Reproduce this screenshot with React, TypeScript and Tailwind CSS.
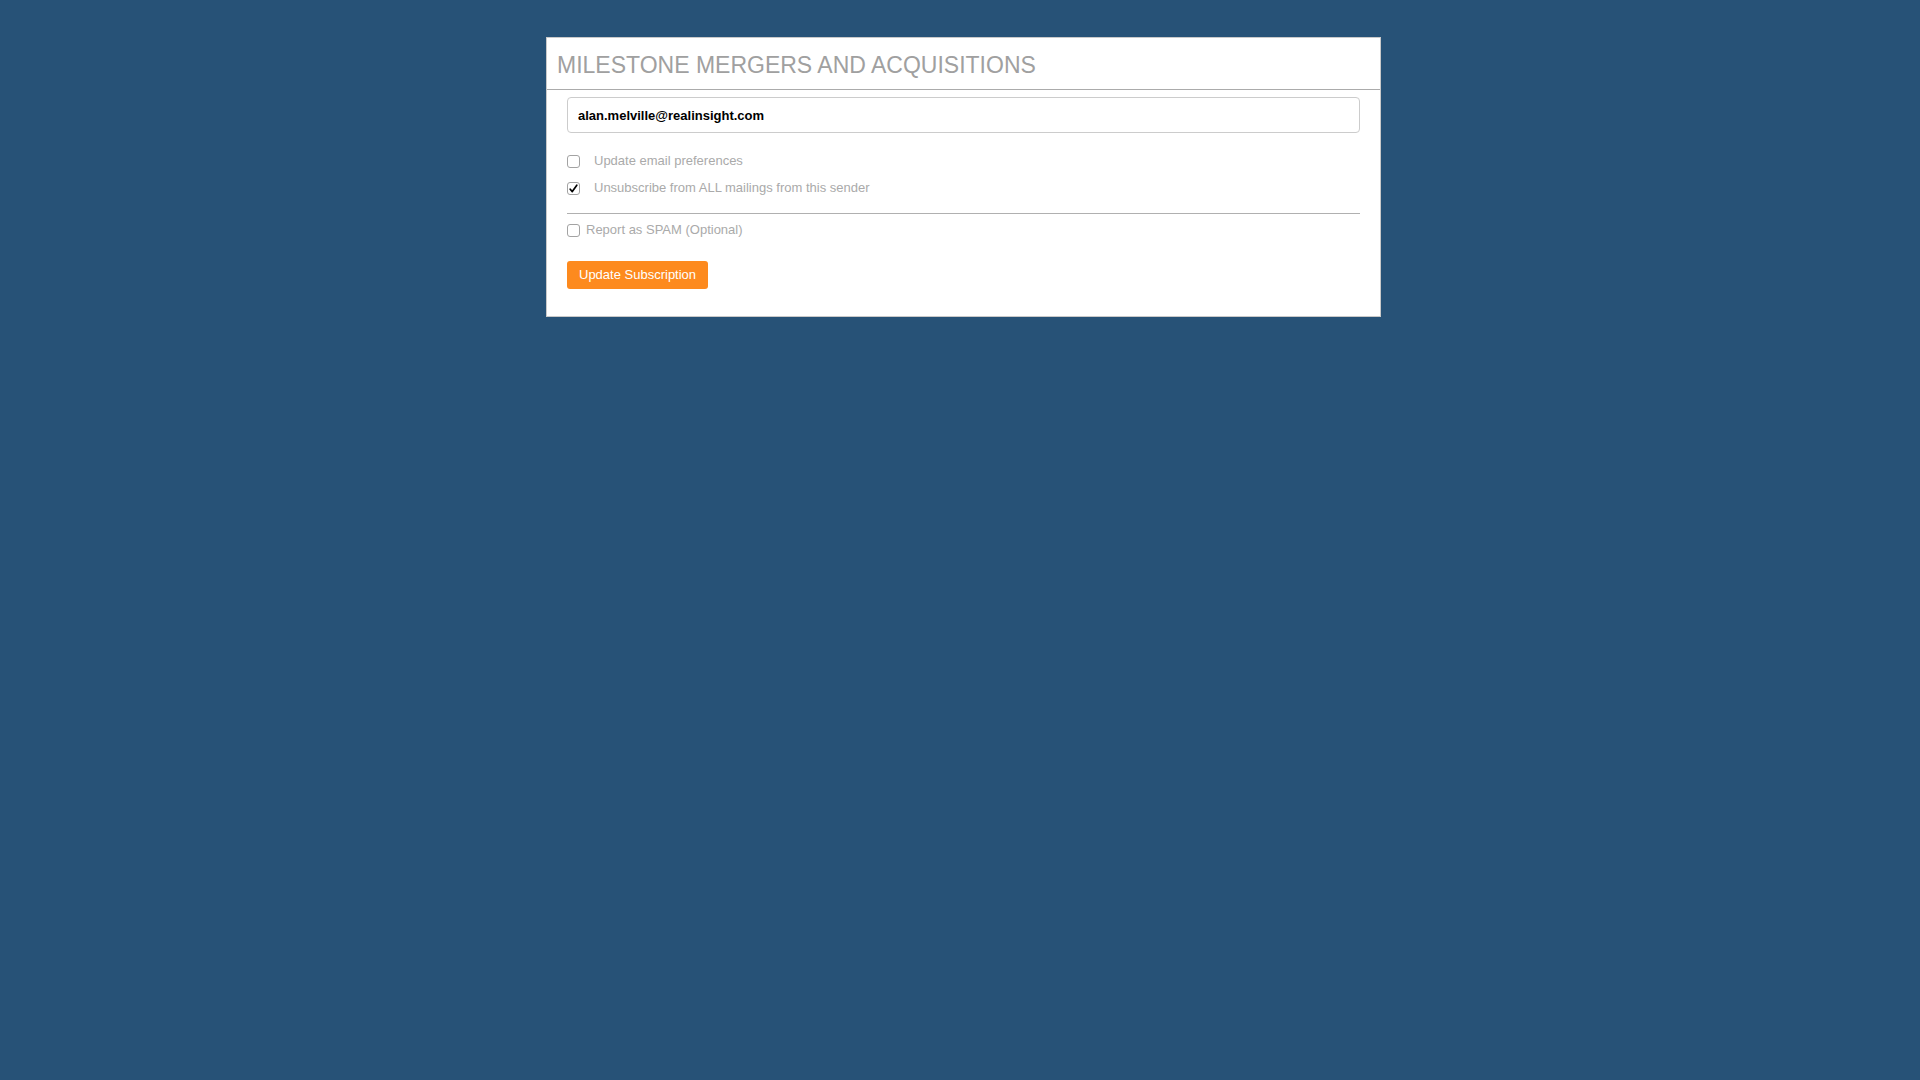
import React, { useState } from 'react';

const CheckBox = ({ checked, onToggle }: { checked: boolean; onToggle: () => void }) => (
  <button
    type="button"
    onClick={onToggle}
    className="flex h-[13px] w-[13px] shrink-0 items-center justify-center rounded-[3px] border border-[#a3a3a3] bg-white p-0"
  >
    {checked && (
      <svg width="9" height="9" viewBox="0 0 9 9">
        <path d="M1.2 5.2 L3.3 7.6 L7.8 1.2" fill="none" stroke="#000" strokeWidth="1.7" strokeLinecap="round" strokeLinejoin="round" />
      </svg>
    )}
  </button>
);

const App = () => {
  const [prefs, setPrefs] = useState(false);
  const [unsub, setUnsub] = useState(true);
  const [spam, setSpam] = useState(false);

  return (
    <div
      className="min-h-screen w-full bg-[#275277] pt-[37px] pl-[7px] flex justify-center items-start"
      style={{ fontFamily: '"Liberation Sans", Arial, sans-serif' }}
    >
      <div className="w-[835px] bg-white border border-[#c9c9c9]">
        {/* Header */}
        <div className="pl-[10px] pt-[13px] pb-[10px] border-b border-[#ababab]">
          <h1 className="text-[23px] leading-[28px] text-[#a0a0a0] font-normal">
            MILESTONE MERGERS AND ACQUISITIONS
          </h1>
        </div>

        {/* Body */}
        <div className="px-[20px] pt-[7px] pb-[27px]">
          <input
            type="text"
            defaultValue="alan.melville@realinsight.com"
            className="block w-full h-[36px] px-[10px] rounded-[4px] border border-[#cccccc] text-[13px] font-bold text-black outline-none"
          />

          <div className="mt-[19px] flex h-[18px] items-center">
            <CheckBox checked={prefs} onToggle={() => setPrefs(!prefs)} />
            <span className="ml-[14px] text-[13px] text-[#aaaaaa]">Update email preferences</span>
          </div>

          <div className="mt-[9px] flex h-[18px] items-center">
            <CheckBox checked={unsub} onToggle={() => setUnsub(!unsub)} />
            <span className="ml-[14px] text-[13px] text-[#aaaaaa]">Unsubscribe from ALL mailings from this sender</span>
          </div>

          <div className="mt-[16px] h-px bg-[#b0b0b0]"></div>

          <div className="mt-[7px] flex h-[18px] items-center">
            <CheckBox checked={spam} onToggle={() => setSpam(!spam)} />
            <span className="ml-[6px] text-[13px] text-[#aaaaaa]">Report as SPAM (Optional)</span>
          </div>

          <button
            type="button"
            className="mt-[22px] h-[28px] px-[12px] rounded-[3px] bg-[#fd8a1e] text-[13px] text-white"
          >
            Update Subscription
          </button>
        </div>
      </div>
    </div>
  );
};

export default App;
